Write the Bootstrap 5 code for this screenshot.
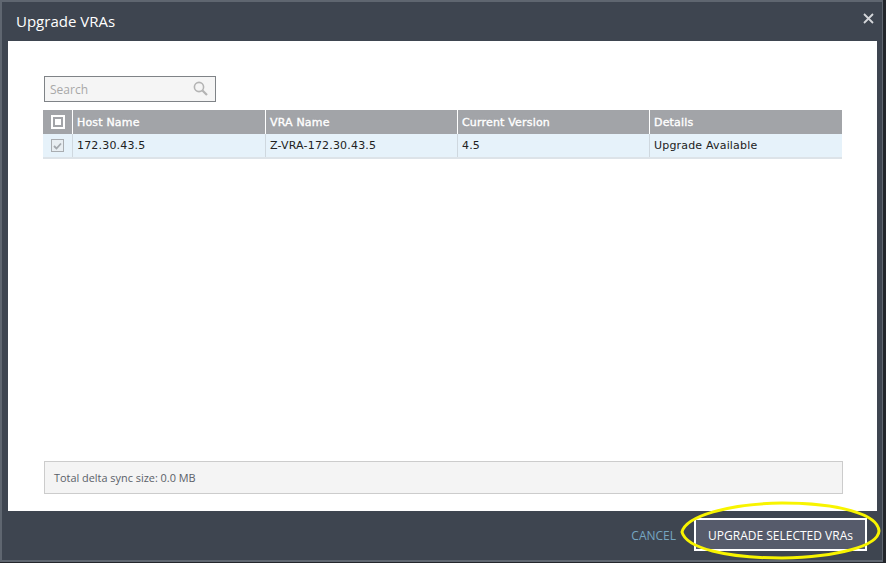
<!DOCTYPE html>
<html lang="en"><head><meta charset="utf-8"><title>Upgrade VRAs</title>
<link rel="stylesheet" href="https://cdn.jsdelivr.net/npm/bootstrap@5.3.0/dist/css/bootstrap.min.css">
<style>
html,body{height:563px;overflow:hidden;background:#23262b;margin:0}
.dlg-frame{width:883px;height:562px;background:#3e4550;border:solid #5f6670;border-width:2px 1px 2px 2px;position:relative;font-family:"Open Sans",sans-serif}
.dlg-head{height:39px;padding-left:14px;padding-right:8px;color:#fff;font-size:15px}
.dlg-close{width:11px;height:11px;margin-top:-6px}
.dlg-body{margin:0 5px 0 6px;height:470px;background:#fff;padding:35px 35px 17px 35px}
.srch{width:172px;height:26px;margin-left:1px;border:1px solid #7f8387;background:#f5f5f5;color:#a8a8a8;font-size:12px;padding:2px 7px 0 5px}
.srch svg{margin-top:-4px}
.vra-grid{margin-top:8px;width:799px;font-family:"DejaVu Sans",sans-serif;font-size:11px;letter-spacing:.18px}
.vra-head{height:24px;background:#a2a4a8;color:#fff;-webkit-text-stroke:.35px #fff}
.vra-row{height:25px;background:#e6f2fa;color:#222;border-bottom:2px solid #dde3e8}
.cellx{padding:2px 0 0 4px;border-left:1px solid #fff;width:192px}
.vra-row .cellx{border-left-color:#cfd8df}
.cellchk{width:29px}
.cellhost{width:193px}
.cellend{width:192px}
.bx-head{width:14px;height:14px;border:2px solid #fff;background:#a2a4a8;padding:2px}
.bx-head i{display:block;width:6px;height:6px;background:#fff}
.bx-row{width:13px;height:13px;border:1px solid #a9adb1;background:#e8eef2}
.delta{width:799px;height:33px;margin-left:1px;border:1px solid #ccc;background:#f4f4f4;color:#5a6068;font-size:10.9px;padding:2px 0 0 9px}
.dlg-foot{height:49px;padding-right:15px;padding-bottom:2px;gap:18px}
.lnk-cancel{color:#76a6c1;font-size:12px;padding-top:2px}
.btn-up{width:173px;height:33px;border:2px solid #fff;background:#565b6b;color:#fff;font-size:12px;white-space:nowrap;padding:2px 0 0}
.halo{position:absolute;left:676px;top:498px;width:204px;height:62px;pointer-events:none}
</style></head>
<body>
<div class="dlg-frame">
 <div class="dlg-head d-flex align-items-center justify-content-between">
  <span>Upgrade VRAs</span>
  <svg class="dlg-close" viewBox="0 0 11 11"><path d="M1 1 10 10M10 1 1 10" stroke="#d4d6da" stroke-width="1.8" fill="none"/></svg>
 </div>
 <div class="dlg-body d-flex flex-column">
  <div class="srch d-flex align-items-center justify-content-between">
   <span>Search</span>
   <svg width="15" height="15" viewBox="0 0 15 15"><circle cx="6" cy="6" r="4.6" stroke="#b4b4b4" stroke-width="1.6" fill="none"/><path d="M9.5 9.5 14 14" stroke="#b4b4b4" stroke-width="2.2"/></svg>
  </div>
  <div class="vra-grid">
   <div class="vra-head d-flex align-items-center">
    <div class="cellchk d-flex justify-content-center"><div class="bx-head"><i></i></div></div>
    <div class="cellx cellhost h-100 d-flex align-items-center">Host Name</div>
    <div class="cellx h-100 d-flex align-items-center">VRA Name</div>
    <div class="cellx h-100 d-flex align-items-center">Current Version</div>
    <div class="cellx cellend h-100 d-flex align-items-center">Details</div>
   </div>
   <div class="vra-row d-flex align-items-center">
    <div class="cellchk d-flex justify-content-center"><div class="bx-row d-flex align-items-center justify-content-center"><svg width="9" height="8" viewBox="0 0 9 8"><path d="M1 4 3.5 6.5 8 1.5" stroke="#a3a8ad" stroke-width="1.8" fill="none"/></svg></div></div>
    <div class="cellx cellhost h-100 d-flex align-items-center">172.30.43.5</div>
    <div class="cellx h-100 d-flex align-items-center">Z-VRA-172.30.43.5</div>
    <div class="cellx h-100 d-flex align-items-center">4.5</div>
    <div class="cellx cellend h-100 d-flex align-items-center">Upgrade Available</div>
   </div>
  </div>
  <div class="delta d-flex align-items-center mt-auto">Total delta sync size: 0.0 MB</div>
 </div>
 <div class="dlg-foot d-flex align-items-center justify-content-end">
  <span class="lnk-cancel">CANCEL</span>
  <button type="button" class="btn-up d-flex align-items-center justify-content-center">UPGRADE SELECTED VRAs</button>
 </div>
 <svg class="halo" viewBox="0 0 204 62"><path d="M4 32C8 16 50 4 104 3 160 3 200 14 201 31 200 46 160 57 104 58 48 58 8 48 4 32Z" fill="none" stroke="#f8f400" stroke-width="3"/></svg>
</div>
</body></html>
